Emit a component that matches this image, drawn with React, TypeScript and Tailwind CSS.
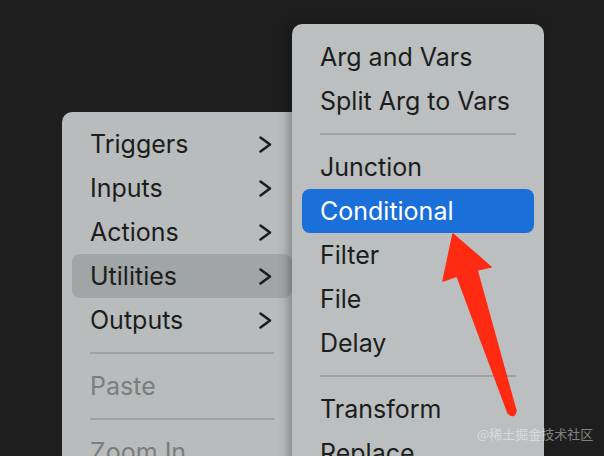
import type { ReactNode } from 'react'

const Chevron = () => (
  <svg width="15" height="19" viewBox="0 0 15 19" fill="none" stroke="#1c1d1d" strokeWidth={2.6} strokeLinecap="round" strokeLinejoin="round">
    <polyline points="2.5,2.5 12,9.5 2.5,16.5" />
  </svg>
)

const Item = ({ children, sub, active, selected, disabled }: { children: ReactNode; sub?: boolean; active?: boolean; selected?: boolean; disabled?: boolean }) => (
  <div
    className={`mx-[10px] h-[44px] pl-[18px] pr-[19px] flex items-center justify-between rounded-[8px] ${
      selected ? 'bg-[#1b6fd8] text-white' : active ? 'bg-[#a1a5a5] text-[#1c1d1d]' : disabled ? 'text-[#7b7e7e]' : 'text-[#1c1d1d]'
    }`}
  >
    <span className="text-[25px] leading-none pt-[1px]">{children}</span>
    {sub && <Chevron />}
  </div>
)

const Separator = () => (
  <div className="h-[22px] px-[28px] pt-[10px]">
    <div className="h-[2px] bg-[#9fa2a2]" />
  </div>
)

export default function App() {
  return (
    <div className="relative w-[604px] h-[456px] overflow-hidden bg-[#1e1e1e]" style={{ fontFamily: 'Inter, "Noto Sans", sans-serif' }}>
      {/* parent context menu */}
      <div className="absolute left-[62px] top-[112px] w-[240px] h-[400px] rounded-[10px] bg-[#b9bcbc] pt-[10px]">
        <Item sub>Triggers</Item>
        <Item sub>Inputs</Item>
        <Item sub>Actions</Item>
        <Item sub active>Utilities</Item>
        <Item sub>Outputs</Item>
        <Separator />
        <Item disabled>Paste</Item>
        <Separator />
        <Item disabled>Zoom In</Item>
      </div>

      {/* submenu */}
      <div className="absolute left-[292px] top-[24px] w-[252px] h-[480px] rounded-[10px] bg-[#bcbfbf] pt-[11px] shadow-[-4px_0_10px_rgba(0,0,0,0.28)]">
        <Item>Arg and Vars</Item>
        <Item>Split Arg to Vars</Item>
        <Separator />
        <Item>Junction</Item>
        <Item selected>Conditional</Item>
        <Item>Filter</Item>
        <Item>File</Item>
        <Item>Delay</Item>
        <Separator />
        <Item>Transform</Item>
        <Item>Replace</Item>
      </div>

      {/* annotation arrow */}
      <svg className="absolute left-0 top-0" width="604" height="456" viewBox="0 0 604 456">
        <path
          d="M453,234 L491,267 L477,270 L516,411 Q514,419 508,413 L457,276 L443,281 Z"
          fill="#ff2a12"
          stroke="#ff2a12"
          strokeWidth={1.5}
          strokeLinejoin="round"
        />
      </svg>

      <div
        className="absolute left-[477px] top-[427px] text-[13px] leading-none text-white/45"
        style={{ fontFamily: '"Noto Sans CJK SC", sans-serif' }}
      >
        @稀土掘金技术社区
      </div>
    </div>
  )
}
